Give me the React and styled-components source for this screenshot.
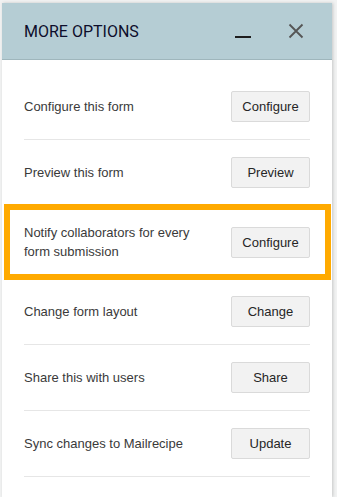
import React from "react";
import styled, { createGlobalStyle } from "styled-components";

const GlobalStyle = createGlobalStyle`
  html, body {
    margin: 0;
    padding: 0;
    background: #f1f2f2;
  }
  body {
    font-family: "Liberation Sans", Arial, sans-serif;
  }
`;

const Panel = styled.div`
  margin: 3px 0 0 2px;
  width: 330px;
  height: 494px;
  background: #fff;
  box-shadow: 1px 0 3px rgba(0, 0, 0, 0.18);
  overflow: hidden;
`;

const Header = styled.div`
  height: 56px;
  background: #b5cdd4;
  border-bottom: 1px solid #9fb6bc;
  display: flex;
  align-items: center;
  padding: 0 28px 0 22px;
`;

const Title = styled.h2`
  flex: 1;
  margin: 0;
  font-family: Roboto, "Liberation Sans", sans-serif;
  font-weight: 400;
  font-size: 16px;
  color: #0d0d2b;
`;

const IconButton = styled.button`
  border: 0;
  background: none;
  padding: 0;
  display: flex;
  align-items: center;
  justify-content: center;
  margin-left: ${(p) => p.$gap || 0}px;
  cursor: pointer;
`;

const Body = styled.div`
  padding: 14px 22px 0 22px;
`;

const Row = styled.div`
  position: relative;
  display: flex;
  align-items: center;
  justify-content: space-between;
  padding: 17px 0;
  min-height: 31px;
  border-bottom: 1px solid #e6e6e6;

  &::after {
    content: "";
    display: ${(p) => (p.$highlighted ? "block" : "none")};
    position: absolute;
    top: -2px;
    left: -20px;
    right: -21px;
    bottom: -2px;
    border: 6px solid #ffaa00;
    pointer-events: none;
  }
`;

const Label = styled.div`
  font-size: 13px;
  line-height: 19px;
  color: #3a3a3a;
  max-width: 180px;
`;

const ActionButton = styled.button`
  width: 79px;
  height: 31px;
  flex-shrink: 0;
  background: #f2f2f2;
  border: 1px solid #dadada;
  border-radius: 2px;
  font-family: "Liberation Sans", Arial, sans-serif;
  font-size: 13px;
  color: #262626;
  cursor: pointer;
`;

const options = [
  { label: "Configure this form", action: "Configure" },
  { label: "Preview this form", action: "Preview" },
  { label: "Notify collaborators for every form submission", action: "Configure", highlighted: true },
  { label: "Change form layout", action: "Change" },
  { label: "Share this with users", action: "Share" },
  { label: "Sync changes to Mailrecipe", action: "Update" },
];

const App = () => {
  return (
    <>
      <GlobalStyle />
      <Panel>
        <Header>
          <Title>MORE OPTIONS</Title>
          <IconButton aria-label="Minimize">
            <svg width="16" height="16" viewBox="0 0 16 16">
              <rect x="0" y="13" width="16" height="2" fill="#1e1e1e" />
            </svg>
          </IconButton>
          <IconButton aria-label="Close" $gap={37}>
            <svg width="16" height="16" viewBox="0 0 16 16">
              <path d="M1.5 1.5 L14.5 14.5 M14.5 1.5 L1.5 14.5" stroke="#555" strokeWidth="1.8" />
            </svg>
          </IconButton>
        </Header>
        <Body>
          {options.map((o, i) => (
            <Row key={i} $highlighted={o.highlighted}>
              <Label>{o.label}</Label>
              <ActionButton>{o.action}</ActionButton>
            </Row>
          ))}
        </Body>
      </Panel>
    </>
  );
};

export default App;
